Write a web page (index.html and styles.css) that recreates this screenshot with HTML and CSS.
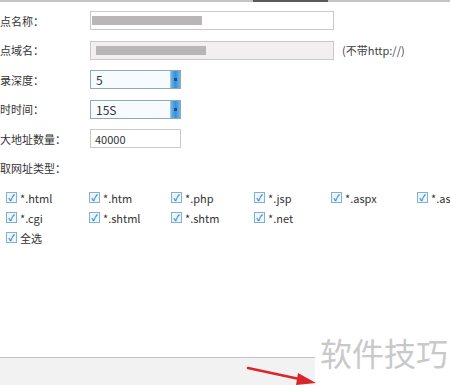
FILE: index.html
```html
<!DOCTYPE html>
<html lang="zh-CN">
<head>
    <meta charset="UTF-8">
    <title>站点设置</title>
    <link rel="stylesheet" href="styles.css">
</head>
<body>
    <div class="topbar"><span class="thumb"></span></div>

    <div class="form">
        <div class="row">
            <span class="label">点名称：</span>
            <div class="field wide"><span class="blur"></span></div>
        </div>
        <div class="row">
            <span class="label">点域名：</span>
            <div class="field wide tinted"><span class="blur shifted"></span></div>
            <span class="hint">(不带http://)</span>
        </div>
        <div class="row">
            <span class="label">录深度：</span>
            <div class="select"><span>5</span><i class="arrow"></i></div>
        </div>
        <div class="row">
            <span class="label">时时间：</span>
            <div class="select"><span>15S</span><i class="arrow"></i></div>
        </div>
        <div class="row">
            <span class="label">大地址数量：</span>
            <div class="field short"><span>40000</span></div>
        </div>
        <div class="row">
            <span class="label">取网址类型：</span>
        </div>
    </div>

    <div class="types">
        <label class="check">*.html</label>
        <label class="check">*.htm</label>
        <label class="check">*.php</label>
        <label class="check">*.jsp</label>
        <label class="check">*.aspx</label>
        <label class="check">*.asp</label>
        <label class="check">*.cgi</label>
        <label class="check">*.shtml</label>
        <label class="check">*.shtm</label>
        <label class="check">*.net</label>
        <label class="check all">全选</label>
    </div>

    <div class="footer"></div>

    <div class="watermark">软件技巧</div>
    <svg class="pointer" width="80" height="24" viewBox="0 0 80 24">
        <path d="M2 4 L58 16" stroke="#d9262b" stroke-width="2.5" stroke-linecap="round"/>
        <path d="M52 9 L70 19 L50 21 Z" fill="#d9262b"/>
    </svg>
</body>
</html>
```

FILE: styles.css
```css
body {
    margin: 0;
    width: 450px;
    height: 385px;
    overflow: hidden;
    background: #ffffff;
    font-family: "Noto Sans CJK SC", "Liberation Sans", sans-serif;
    font-size: 11px;
    color: #333333;
    position: relative;
}

.topbar {
    height: 2px;
    background: #c4c4c4;
    position: relative;
}

.topbar .thumb {
    position: absolute;
    left: 253px;
    width: 75px;
    height: 2px;
    background: #5a5a5a;
}

.form {
    padding-top: 9px;
    display: flex;
    flex-direction: column;
    gap: 10.5px;
}

.row {
    display: flex;
    align-items: center;
    height: 19px;
}

.label {
    width: 90px;
    flex-shrink: 0;
    white-space: nowrap;
}

.field {
    height: 17px;
    border: 1px solid #c9c9c9;
    background: #ffffff;
    display: flex;
    align-items: center;
    padding-left: 4px;
    box-sizing: content-box;
}

.field.wide {
    width: 238px;
}

.field.short {
    width: 85px;
}

.field.tinted {
    background: #f3eff0;
}

.blur {
    width: 110px;
    height: 9px;
    background: #b8b6b7;
    filter: blur(0.6px);
    margin-left: -3px;
}

.blur.shifted {
    margin-left: 1px;
}

.hint {
    margin-left: 8px;
    color: #444444;
}

.select {
    width: 84px;
    height: 17px;
    border: 1px solid #8fa8b8;
    background: #f7fbfd;
    display: flex;
    align-items: center;
    justify-content: space-between;
    padding-left: 5px;
    box-sizing: content-box;
    font-size: 12px;
}

.select .arrow {
    width: 9px;
    height: 17px;
    background: linear-gradient(90deg, #6ab4e8, #3a8fd6 50%, #6ab4e8);
    border-left: 1px solid #9cc7e6;
    position: relative;
}

.select .arrow::after {
    content: "";
    position: absolute;
    left: 3px;
    top: 7px;
    width: 3px;
    height: 3px;
    background: #1a4f8a;
}

.types {
    margin-top: 14px;
    padding-left: 6px;
    display: grid;
    grid-template-columns: 83px 82px 83px 77px 86px 80px;
    row-gap: 8px;
}

.check {
    display: flex;
    align-items: center;
    gap: 3px;
    height: 12px;
    white-space: nowrap;
    font-size: 11px;
}

.check::before {
    content: "✓";
    width: 9px;
    height: 9px;
    border: 1px solid #7fb2cf;
    background: #eef6fb;
    color: #2f86c8;
    font-size: 9px;
    line-height: 9px;
    text-align: center;
    font-weight: bold;
}

.check.all {
    grid-column: 1;
}

.footer {
    position: absolute;
    left: 0;
    right: 0;
    bottom: 0;
    height: 27px;
    border-top: 1px solid #c6c6c6;
    background: #f2f2f2;
}

.watermark {
    position: absolute;
    left: 315px;
    top: 320px;
    width: 135px;
    height: 65px;
    background: #ffffff;
    color: #c9c9c9;
    font-size: 32px;
    line-height: 65px;
    padding-left: 5px;
    box-sizing: border-box;
    white-space: nowrap;
}

.pointer {
    position: absolute;
    left: 246px;
    top: 364px;
}
```
